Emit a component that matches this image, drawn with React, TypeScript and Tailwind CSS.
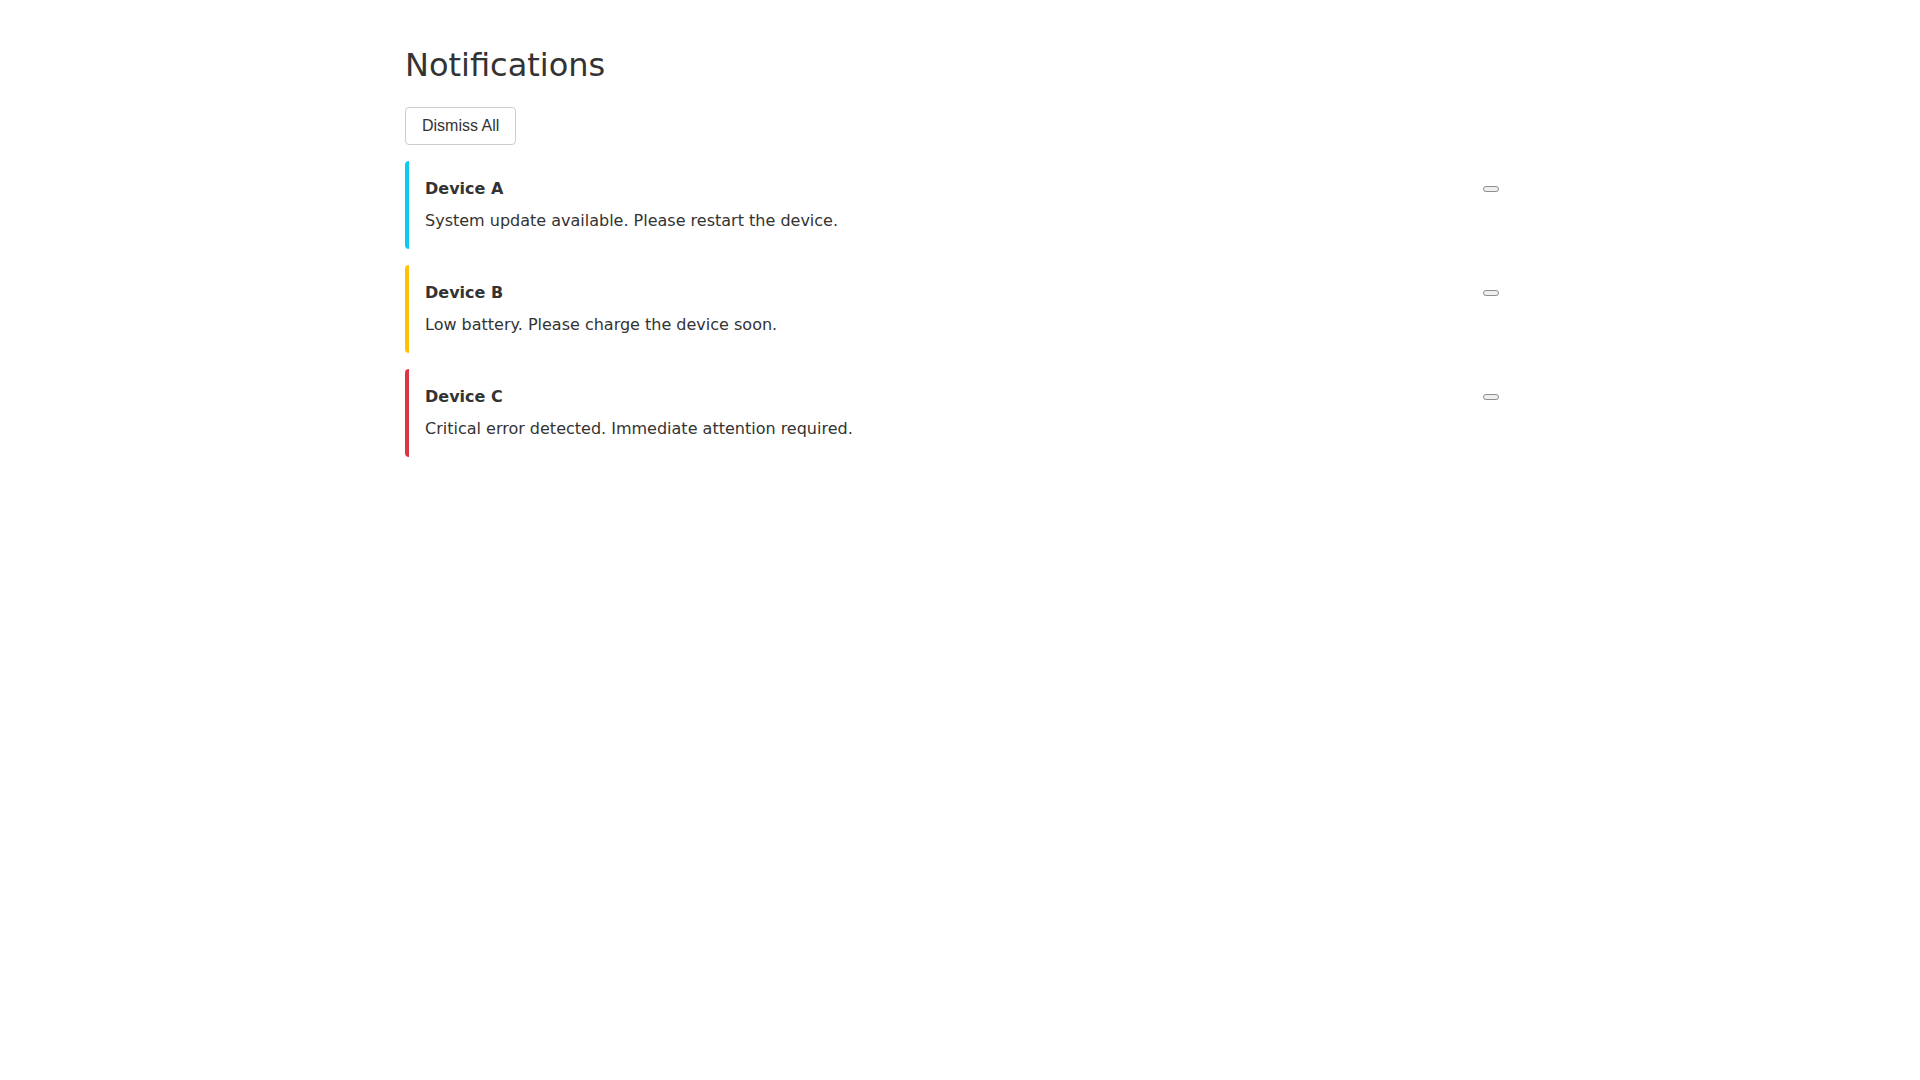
import React, { useState } from 'react';

type Note = { id: number; device: string; message: string; level: 'info' | 'warning' | 'danger' };

const initial: Note[] = [
  { id: 1, device: 'Device A', message: 'System update available. Please restart the device.', level: 'info' },
  { id: 2, device: 'Device B', message: 'Low battery. Please charge the device soon.', level: 'warning' },
  { id: 3, device: 'Device C', message: 'Critical error detected. Immediate attention required.', level: 'danger' },
];

// border colours per level
const levelClass = {
  info: 'border-[#0dcaf0]',
  warning: 'border-[#ffc107]',
  danger: 'border-[#dc3545]',
};

export default function App() {
  const [notes, setNotes] = useState<Note[]>(initial);

  const dismiss = (id: number) => setNotes(n => n.filter(x => x.id !== id));

  return (
    <div className="min-h-screen bg-white text-[#333] font-['DejaVu_Sans',sans-serif]">
      <div className="max-w-[1140px] mx-auto px-[15px] pt-[46px]">
        <h2 className="text-[32px] leading-[38px] font-normal mb-[23px]">Notifications</h2>

        <button
          onClick={() => setNotes([])}
          className="h-[38px] px-4 border border-[#ccc] rounded-[4px] bg-white text-[16px] text-[#333] font-['Liberation_Sans',Arial,sans-serif] hover:bg-gray-50"
        >
          Dismiss All
        </button>

        <div className="mt-4 flex flex-col gap-4">
          {notes.map(n => (
            <div key={n.id} className={`border-l-4 rounded-[4px] bg-white px-4 py-4 ${levelClass[n.level]}`}>
              <div className="flex items-center justify-between">
                <h5 className="text-[16px] leading-6 font-bold">{n.device}</h5>
                <button
                  aria-label="Close"
                  onClick={() => dismiss(n.id)}
                  className="w-4 h-[6px] border border-[#8f8f8f] bg-[#efefef] rounded-[3px]"
                ></button>
              </div>
              <p className="mt-2 text-[16px] leading-6">{n.message}</p>
            </div>
          ))}
        </div>
      </div>
    </div>
  );
}
